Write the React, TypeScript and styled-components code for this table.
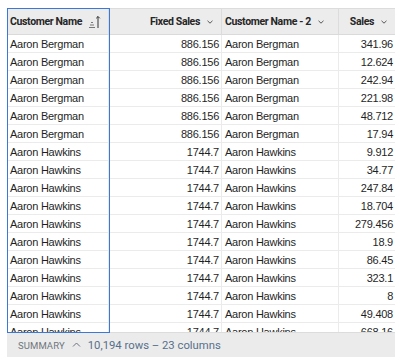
import React from "react";
import styled, { createGlobalStyle } from "styled-components";

const Global = createGlobalStyle`
  html, body { margin: 0; padding: 0; background: #ffffff; }
  body { font-family: "Liberation Sans", Arial, sans-serif; }
`;

const Page = styled.div`
  padding: 8px 3px 5px 7px;
  width: 398px;
  height: 362px;
  box-sizing: border-box;
`;

const Table = styled.div`
  position: relative;
  display: grid;
  grid-template-rows: 26px 297px 25px;
  border-top: 1px solid #dcdcdc;
  box-sizing: border-box;
`;

const COLS = "102px 113px 117px 56px";

const HeaderRow = styled.div`
  display: grid;
  grid-template-columns: ${COLS};
  background: #ececec;
  border-bottom: 1px solid #dadada;
`;

const HeadCell = styled.div<{ $align?: "left" | "right" }>`
  display: flex;
  align-items: center;
  justify-content: ${(p) => (p.$align === "right" ? "flex-end" : "flex-start")};
  gap: 6px;
  padding: 0 7px 0 3px;
  font-family: Roboto, "Noto Sans", sans-serif;
  font-weight: 700;
  font-size: 10.5px;
  letter-spacing: -0.35px;
  color: #262626;
  white-space: nowrap;
  overflow: hidden;
  border-right: 1px solid #dcdcdc;
  &:last-child { border-right: none; }
`;

const Body = styled.div`
  overflow: hidden;
`;

const Row = styled.div`
  display: grid;
  grid-template-columns: ${COLS};
  height: 18px;
  box-sizing: border-box;
  border-bottom: 1px solid #ebebeb;
`;

const Cell = styled.div<{ $align?: "left" | "right" }>`
  display: flex;
  align-items: center;
  justify-content: ${(p) => (p.$align === "right" ? "flex-end" : "flex-start")};
  padding: 0 2px 0 3px;
  font-family: "Liberation Sans", Arial, sans-serif;
  font-size: 11px;
  letter-spacing: -0.25px;
  color: #1f1f1f;
  white-space: nowrap;
  overflow: hidden;
  border-right: 1px solid #ebebeb;
  &:last-child { border-right: none; }
`;

const Footer = styled.div`
  display: flex;
  align-items: center;
  gap: 7px;
  padding-left: 11px;
  background: #ebebeb;
  border-top: 1px solid #dcdcdc;
  font-family: Roboto, "Noto Sans", sans-serif;
`;

const SummaryLabel = styled.span`
  color: #6f7680;
  font-size: 9.5px;
  letter-spacing: 0.1px;
`;

const RowsInfo = styled.span`
  color: #56708c;
  font-size: 11.3px;
`;

const Selection = styled.div`
  position: absolute;
  left: 0;
  top: -1px;
  width: 103px;
  height: 325px;
  border: 1px solid #3b78d8;
  box-sizing: border-box;
  pointer-events: none;
`;

const Chevron = () => (
  <svg width="8" height="8" viewBox="0 0 8 8" fill="none">
    <path d="M1.5 2.8 L4 5.2 L6.5 2.8" stroke="#555" strokeWidth="1" />
  </svg>
);

const SortIcon = () => (
  <svg width="13" height="14" viewBox="0 0 13 14" fill="none">
    <path d="M1 12.5 H7 M2 10 H6 M3 7.5 H5" stroke="#777" strokeWidth="1" />
    <path d="M10 13 V1.5 M8.2 3.3 L10 1.5 L11.8 3.3" stroke="#333" strokeWidth="1" />
  </svg>
);

const rows: [string, string, string, string][] = [
  ["Aaron Bergman", "886.156", "Aaron Bergman", "341.96"],
  ["Aaron Bergman", "886.156", "Aaron Bergman", "12.624"],
  ["Aaron Bergman", "886.156", "Aaron Bergman", "242.94"],
  ["Aaron Bergman", "886.156", "Aaron Bergman", "221.98"],
  ["Aaron Bergman", "886.156", "Aaron Bergman", "48.712"],
  ["Aaron Bergman", "886.156", "Aaron Bergman", "17.94"],
  ["Aaron Hawkins", "1744.7", "Aaron Hawkins", "9.912"],
  ["Aaron Hawkins", "1744.7", "Aaron Hawkins", "34.77"],
  ["Aaron Hawkins", "1744.7", "Aaron Hawkins", "247.84"],
  ["Aaron Hawkins", "1744.7", "Aaron Hawkins", "18.704"],
  ["Aaron Hawkins", "1744.7", "Aaron Hawkins", "279.456"],
  ["Aaron Hawkins", "1744.7", "Aaron Hawkins", "18.9"],
  ["Aaron Hawkins", "1744.7", "Aaron Hawkins", "86.45"],
  ["Aaron Hawkins", "1744.7", "Aaron Hawkins", "323.1"],
  ["Aaron Hawkins", "1744.7", "Aaron Hawkins", "8"],
  ["Aaron Hawkins", "1744.7", "Aaron Hawkins", "49.408"],
  ["Aaron Hawkins", "1744.7", "Aaron Hawkins", "668.16"],
];

export default function App() {
  return (
    <>
      <Global />
      <Page>
        <Table>
          <HeaderRow>
            <HeadCell>
              Customer Name <SortIcon />
            </HeadCell>
            <HeadCell $align="right">
              Fixed Sales <Chevron />
            </HeadCell>
            <HeadCell>
              Customer Name - 2 <Chevron />
            </HeadCell>
            <HeadCell $align="right">
              Sales <Chevron />
            </HeadCell>
          </HeaderRow>
          <Body>
            {rows.map((r, i) => (
              <Row key={i}>
                <Cell>{r[0]}</Cell>
                <Cell $align="right">{r[1]}</Cell>
                <Cell>{r[2]}</Cell>
                <Cell $align="right">{r[3]}</Cell>
              </Row>
            ))}
          </Body>
          <Footer>
            <SummaryLabel>SUMMARY</SummaryLabel>
            <svg width="9" height="8" viewBox="0 0 9 8" fill="none">
              <path d="M1 5.5 L4.5 2 L8 5.5" stroke="#6b7280" strokeWidth="1" />
            </svg>
            <RowsInfo>10,194 rows – 23 columns</RowsInfo>
          </Footer>
          <Selection />
        </Table>
      </Page>
    </>
  );
}
